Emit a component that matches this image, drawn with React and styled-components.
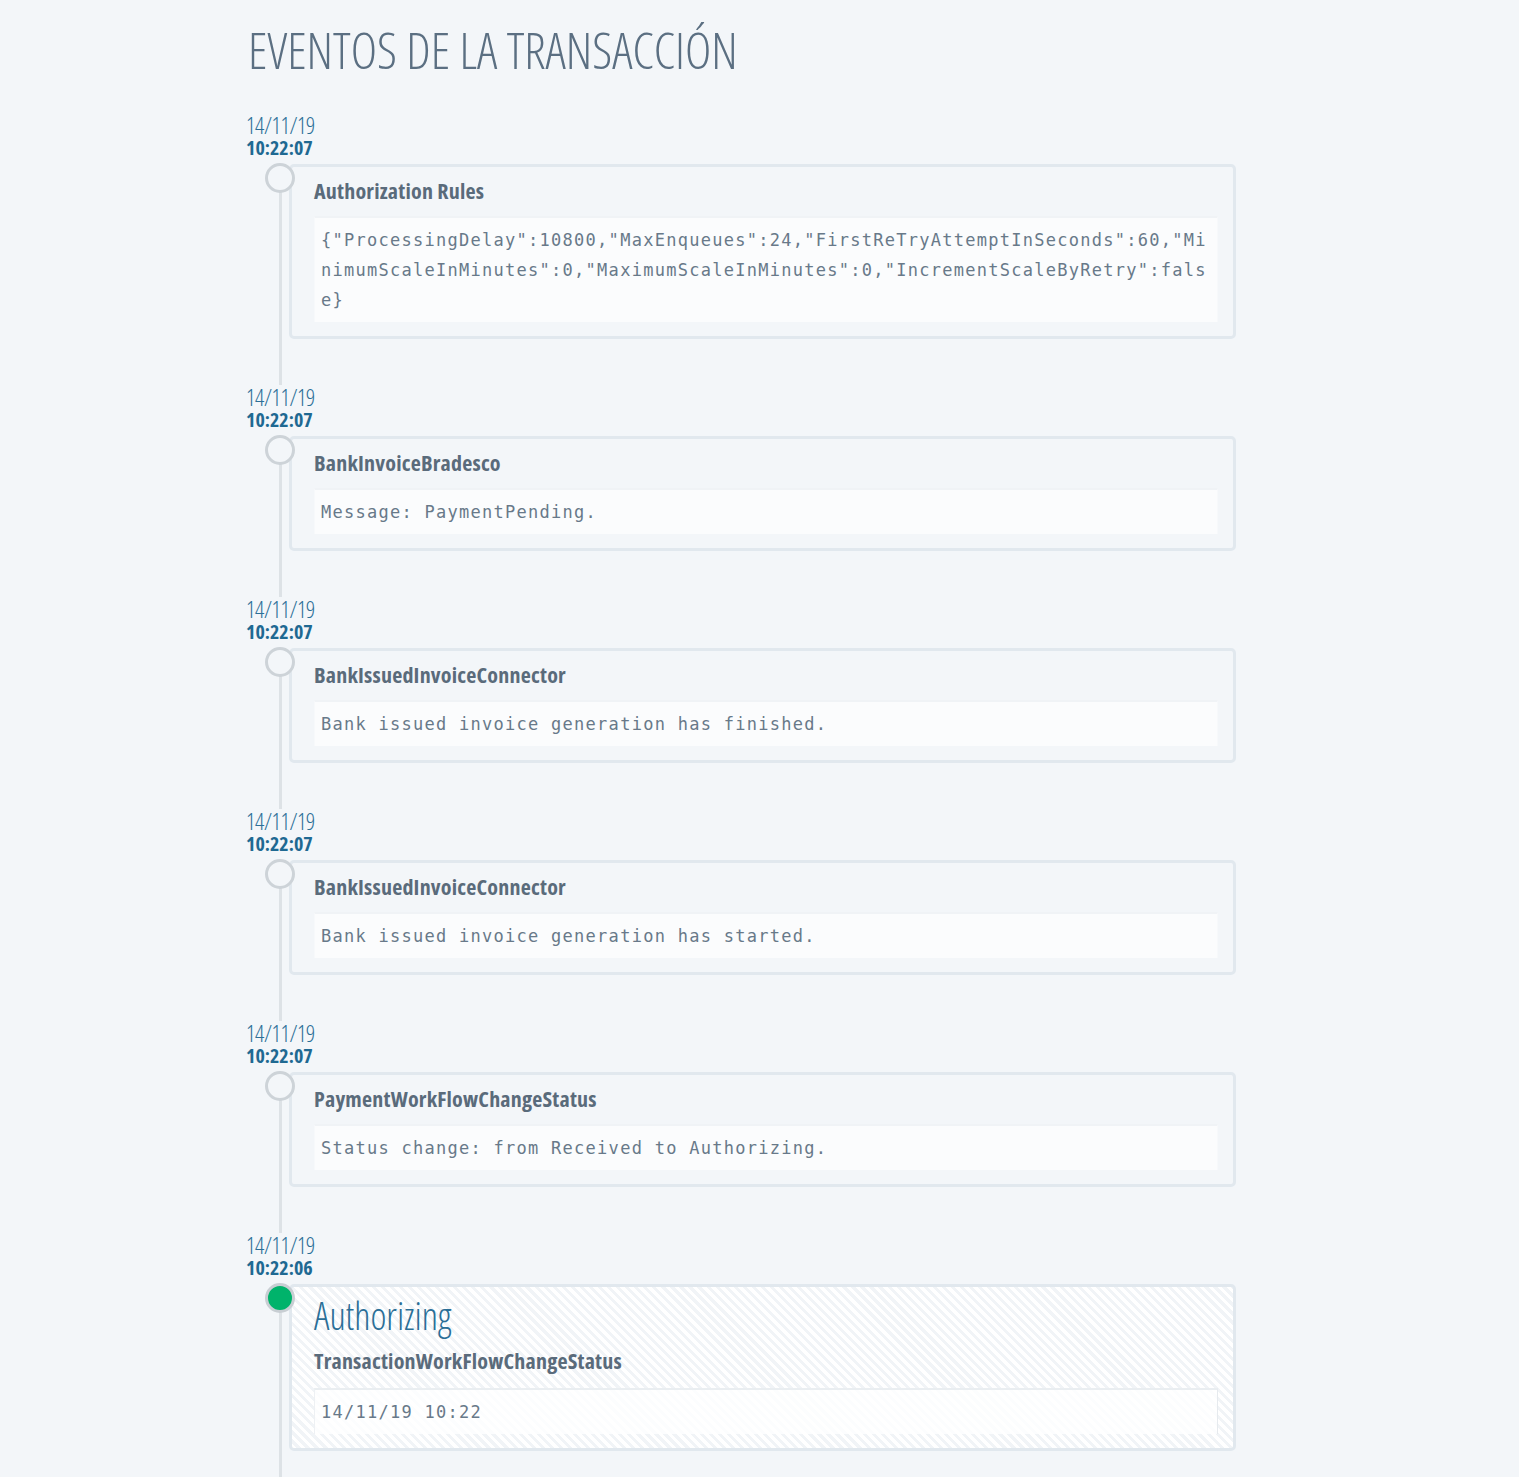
import React from "react";
import styled, { createGlobalStyle } from "styled-components";

const GlobalStyle = createGlobalStyle`
  html, body {
    margin: 0;
    padding: 0;
    background: #f3f6f9;
  }
`;

const Page = styled.div`
  min-height: 1477px;
  padding: 20px 0 0 246px;
  box-sizing: border-box;
  background: #f3f6f9;
  font-family: "Open Sans", "Liberation Sans Narrow", sans-serif;
  font-stretch: 75%;
`;

const Content = styled.div`
  width: 990px;
`;

const Heading = styled.h1`
  margin: 0 0 33px 2px;
  font-size: 50px;
  line-height: 60px;
  font-weight: 300;
  color: #5b6f82;
`;

const Timeline = styled.div`
  position: relative;
  padding-bottom: 40px;

  &::before {
    content: "";
    position: absolute;
    left: 33px;
    top: 53px;
    bottom: 0;
    width: 3px;
    background: #dde2e6;
  }
`;

const Event = styled.div`
  margin-bottom: 46px;

  &:last-child {
    margin-bottom: 0;
  }
`;

const DateBlock = styled.div`
  position: relative;
  z-index: 1;
  padding-bottom: 5px;
  background: #f3f6f9;
  width: 90px;
  color: #2b6f97;
`;

const DateText = styled.div`
  font-size: 23px;
  line-height: 24px;
  font-weight: 300;
  letter-spacing: -0.4px;
`;

const TimeText = styled.div`
  font-size: 20px;
  line-height: 22px;
  font-weight: 700;
  color: #1f6992;
`;

const Row = styled.div`
  position: relative;
  padding-left: 43px;
`;

const Marker = styled.span`
  position: absolute;
  z-index: 2;
  left: 19px;
  top: -1px;
  width: 30px;
  height: 30px;
  box-sizing: border-box;
  border-radius: 50%;
  border: 3px solid ${p => (p.active ? "#c8ced3" : "#cdd3d8")};
  background: ${p => (p.active ? "#00b36b" : "#f3f6f9")};
`;

const Card = styled.div`
  border: 3px solid #e1e8ee;
  border-radius: 5px;
  padding: 8px 15px 14px 22px;
  background: ${p =>
    p.active
      ? "repeating-linear-gradient(45deg, #ffffff 0, #ffffff 3.4px, #f1f4f7 3.4px, #f1f4f7 6.4px)"
      : "#f3f6f9"};
`;

const Status = styled.div`
  font-size: 38px;
  line-height: 46px;
  font-weight: 300;
  color: #2b6f97;
  margin: -3px 0 7px;
`;

const CardTitle = styled.div`
  font-size: 22px;
  line-height: 30px;
  font-weight: 700;
  letter-spacing: 0.2px;
  color: #5a6b7b;
  margin-bottom: ${p => (p.active ? "15px" : "13px")};
`;

const Message = styled.div`
  padding: 7px 6px;
  border-top: 2px solid ${p => (p.active ? "#eaeef1" : "#f0f3f6")};
  border-left: 1px solid ${p => (p.active ? "#eef1f4" : "#f7f9fb")};
  border-right: 1px solid ${p => (p.active ? "#e6eaee" : "#f7f9fb")};
  margin-top: -2px;
  background: ${p => (p.active ? "rgba(255, 255, 255, 0.8)" : "#fbfcfd")};
  font-family: "DejaVu Sans Mono", "Liberation Mono", monospace;
  font-stretch: normal;
  font-size: 17px;
  letter-spacing: 1.27px;
  line-height: 30px;
  color: #687989;
  word-break: break-all;
`;

const events = [
  {
    date: "14/11/19",
    time: "10:22:07",
    title: "Authorization Rules",
    message:
      '{"ProcessingDelay":10800,"MaxEnqueues":24,"FirstReTryAttemptInSeconds":60,"MinimumScaleInMinutes":0,"MaximumScaleInMinutes":0,"IncrementScaleByRetry":false}'
  },
  {
    date: "14/11/19",
    time: "10:22:07",
    title: "BankInvoiceBradesco",
    message: "Message: PaymentPending."
  },
  {
    date: "14/11/19",
    time: "10:22:07",
    title: "BankIssuedInvoiceConnector",
    message: "Bank issued invoice generation has finished."
  },
  {
    date: "14/11/19",
    time: "10:22:07",
    title: "BankIssuedInvoiceConnector",
    message: "Bank issued invoice generation has started."
  },
  {
    date: "14/11/19",
    time: "10:22:07",
    title: "PaymentWorkFlowChangeStatus",
    message: "Status change: from Received to Authorizing."
  },
  {
    date: "14/11/19",
    time: "10:22:06",
    status: "Authorizing",
    title: "TransactionWorkFlowChangeStatus",
    message: "14/11/19 10:22",
    active: true
  }
];

function App() {
  return (
    <>
      <GlobalStyle />
      <Page>
        <Content>
          <Heading>EVENTOS DE LA TRANSACCIÓN</Heading>
          <Timeline>
            {events.map((ev, i) => (
              <Event key={i}>
                <DateBlock>
                  <DateText>{ev.date}</DateText>
                  <TimeText>{ev.time}</TimeText>
                </DateBlock>
                <Row>
                  <Marker active={ev.active} />
                  <Card active={ev.active}>
                    {ev.status && <Status>{ev.status}</Status>}
                    <CardTitle active={ev.active}>{ev.title}</CardTitle>
                    <Message active={ev.active}>{ev.message}</Message>
                  </Card>
                </Row>
              </Event>
            ))}
          </Timeline>
        </Content>
      </Page>
    </>
  );
}

export default App;
